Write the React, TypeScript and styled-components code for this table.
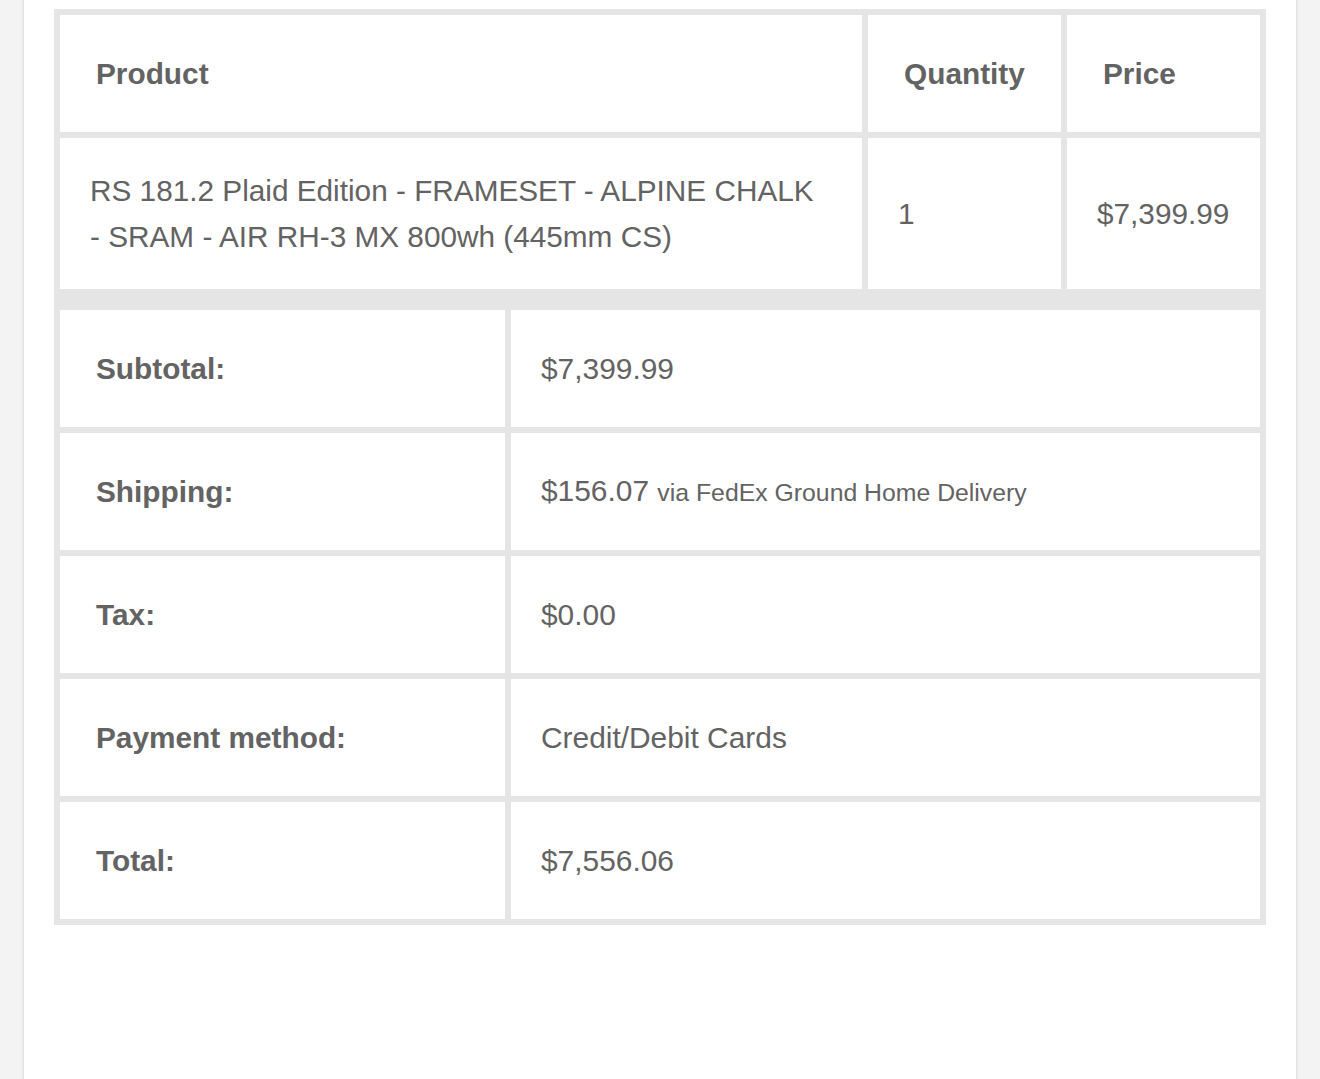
import React from "react";
import styled, { createGlobalStyle } from "styled-components";

const GlobalStyle = createGlobalStyle`
  html, body {
    margin: 0;
    padding: 0;
    background: #f3f3f3;
  }
  * { box-sizing: border-box; }
`;

const Page = styled.div`
  min-height: 100vh;
  padding: 0 23px;
  background: #f3f3f3;
  font-family: "Liberation Sans", Arial, Helvetica, sans-serif;
  color: #636363;
`;

const Card = styled.main`
  min-height: 100vh;
  background: #ffffff;
  border-left: 1px solid #e3e3e3;
  border-right: 1px solid #e3e3e3;
  box-shadow: 0 0 3px rgba(0, 0, 0, 0.05);
  padding: 9px 30px 60px;
`;

const OrderTable = styled.section`
  background: #e5e5e5;
  padding: 6px;
  display: flex;
  flex-direction: column;
  gap: 21px;
`;

const ItemsGrid = styled.div`
  display: grid;
  grid-template-columns: 802px 193px 193px;
  gap: 6px;
`;

const TotalsGrid = styled.div`
  display: grid;
  grid-template-columns: 445px 1fr;
  gap: 6px;
`;

const HeadCell = styled.div`
  background: #ffffff;
  height: 117px;
  padding: 0 20px 0 36px;
  display: flex;
  align-items: center;
  font-size: 29.8px;
  font-weight: 700;
  line-height: 46px;
`;

const BodyCell = styled.div<{ $wide?: boolean }>`
  background: #ffffff;
  padding: ${(p) => (p.$wide ? "30px 40px 29px 30px" : "30px 20px 29px 30px")};
  display: flex;
  align-items: center;
  font-size: 29.75px;
  font-weight: 400;
  line-height: 46px;
`;

const LabelCell = styled.div`
  background: #ffffff;
  height: 117px;
  padding: 0 20px 0 36px;
  display: flex;
  align-items: center;
  font-size: 29.8px;
  font-weight: 700;
  line-height: 46px;
`;

const ValueCell = styled.div`
  background: #ffffff;
  padding: 0 30px;
  display: flex;
  align-items: center;
  font-size: 29.9px;
  line-height: 46px;
`;

const ValueText = styled.span``;

const ShippedVia = styled.small`
  font-size: 24.8px;
`;

const totals: { label: string; value: React.ReactNode }[] = [
  { label: "Subtotal:", value: "$7,399.99" },
  {
    label: "Shipping:",
    value: (
      <>
        $156.07 <ShippedVia>via FedEx Ground Home Delivery</ShippedVia>
      </>
    ),
  },
  { label: "Tax:", value: "$0.00" },
  { label: "Payment method:", value: "Credit/Debit Cards" },
  { label: "Total:", value: "$7,556.06" },
];

export default function App() {
  return (
    <>
      <GlobalStyle />
      <Page>
        <Card>
          <OrderTable>
            <ItemsGrid>
              <HeadCell>Product</HeadCell>
              <HeadCell>Quantity</HeadCell>
              <HeadCell>Price</HeadCell>
              <BodyCell $wide>
                RS 181.2 Plaid Edition - FRAMESET - ALPINE CHALK - SRAM - AIR RH-3 MX 800wh (445mm CS)
              </BodyCell>
              <BodyCell>1</BodyCell>
              <BodyCell>$7,399.99</BodyCell>
            </ItemsGrid>
            <TotalsGrid>
              {totals.map((t) => (
                <React.Fragment key={t.label}>
                  <LabelCell>{t.label}</LabelCell>
                  <ValueCell>
                    <ValueText>{t.value}</ValueText>
                  </ValueCell>
                </React.Fragment>
              ))}
            </TotalsGrid>
          </OrderTable>
        </Card>
      </Page>
    </>
  );
}
